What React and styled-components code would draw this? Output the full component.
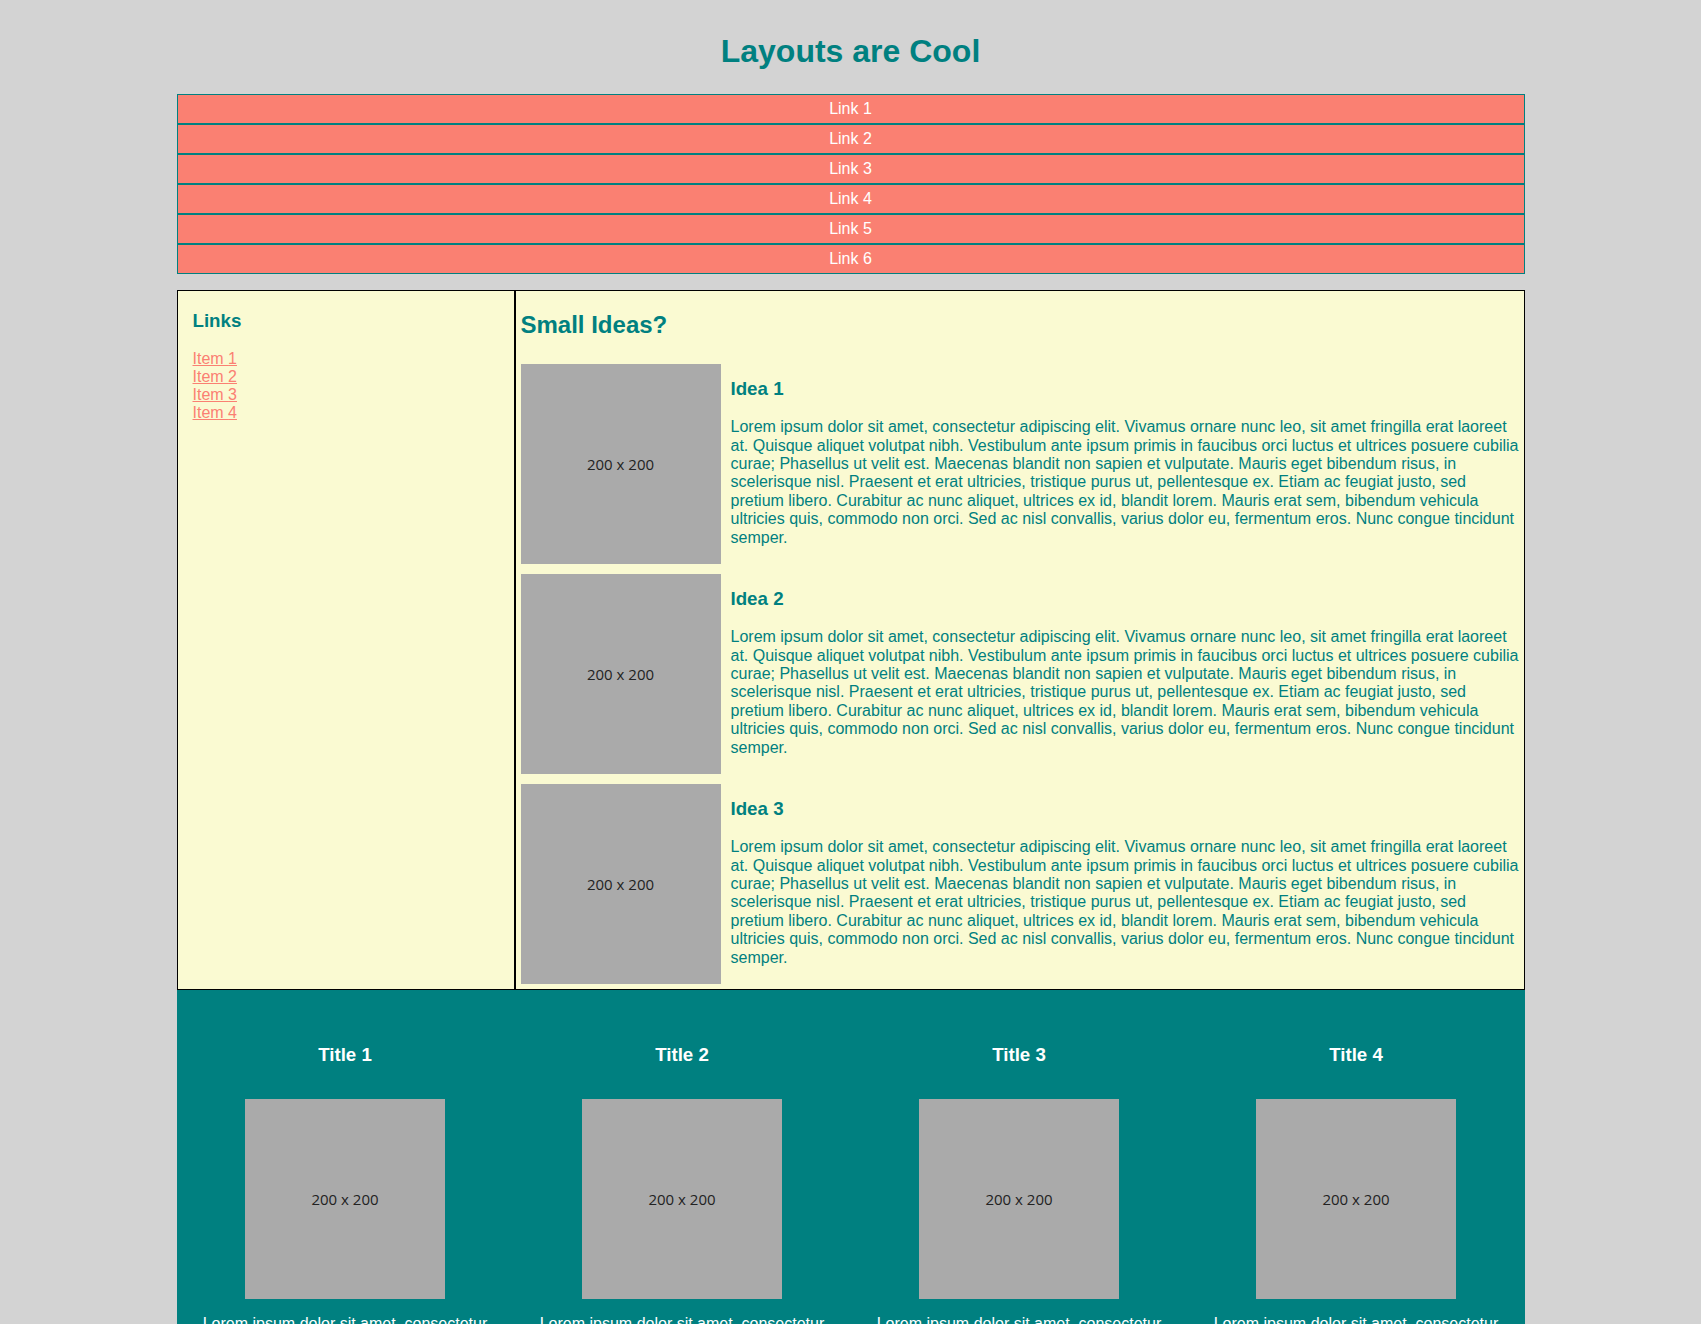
import React from "react";
import styled, { createGlobalStyle } from "styled-components";

const GlobalStyle = createGlobalStyle`
  html, body {
    margin: 0;
    padding: 0;
    background: #d3d3d3;
    font-family: "Liberation Sans", Arial, sans-serif;
  }
  * { box-sizing: border-box; }
`;

const Page = styled.div`
  padding-top: 33px;
  overflow: hidden;
`;

const Title = styled.h1`
  margin: 0 0 24px;
  text-align: center;
  color: #008080;
  font-size: 32px;
  line-height: 37px;
  font-weight: bold;
`;

const Container = styled.div`
  width: 1348px;
  margin: 0 auto;
`;

const Nav = styled.nav`
  display: flex;
  flex-direction: column;
  margin-bottom: 16px;
`;

const NavLink = styled.a`
  display: block;
  background: #fa8072;
  border: 1px solid #008080;
  color: #ffffff;
  text-align: center;
  text-decoration: none;
  font-size: 16px;
  line-height: 18px;
  padding: 5px;
`;

const Main = styled.main`
  display: flex;
  align-items: stretch;
  background: #fafad2;
`;

const Aside = styled.aside`
  flex: 0 0 338px;
  border: 1px solid #000;
  padding: 0 15px;
`;

const AsideTitle = styled.h3`
  margin: 18.72px 0;
  font-size: 18.72px;
  color: #008080;
`;

const LinkList = styled.ul`
  list-style: none;
  margin: 1px 0 0;
  padding: 0;
`;

const ItemLink = styled.a`
  display: inline-block;
  color: #fa8072;
  font-size: 16px;
  line-height: 18px;
  text-decoration: underline;
`;

const Content = styled.section`
  flex: 1;
  border: 1px solid #000;
`;

const SectionTitle = styled.h2`
  margin: 19.92px 5px;
  font-size: 24px;
  color: #008080;
`;

const Idea = styled.article`
  display: flex;
  align-items: flex-start;
`;

const Placeholder = styled.div`
  flex: 0 0 200px;
  width: 200px;
  height: 200px;
  margin: ${(p) => p.$margin || "5px"};
  background: #aaaaaa;
  color: #222;
  display: flex;
  align-items: center;
  justify-content: center;
  font-family: "Open Sans", "DejaVu Sans", sans-serif;
  font-size: 15px;
`;

const IdeaBody = styled.div`
  flex: 1;
  padding: 0 5px;
  color: #008080;
`;

const IdeaTitle = styled.h3`
  margin: 18.72px 0;
  font-size: 18.72px;
`;

const IdeaText = styled.p`
  margin: 16px 0;
  font-size: 16px;
  line-height: 18.4px;
`;

const Footer = styled.footer`
  display: grid;
  grid-template-columns: repeat(4, 1fr);
  background: #008080;
  padding: 20px 0;
`;

const FooterCol = styled.div`
  padding: 15px;
  text-align: center;
  color: #ffffff;
  display: flex;
  flex-direction: column;
  align-items: center;
`;

const FooterTitle = styled.h3`
  margin: 18.72px 0;
  font-size: 18.72px;
`;

const FooterText = styled.p`
  margin: 16px 0;
  font-size: 16px;
  line-height: 18.4px;
`;

const lorem =
  "Lorem ipsum dolor sit amet, consectetur adipiscing elit. Vivamus ornare nunc leo, sit amet fringilla erat laoreet at. Quisque aliquet volutpat nibh. Vestibulum ante ipsum primis in faucibus orci luctus et ultrices posuere cubilia curae; Phasellus ut velit est. Maecenas blandit non sapien et vulputate. Mauris eget bibendum risus, in scelerisque nisl. Praesent et erat ultricies, tristique purus ut, pellentesque ex. Etiam ac feugiat justo, sed pretium libero. Curabitur ac nunc aliquet, ultrices ex id, blandit lorem. Mauris erat sem, bibendum vehicula ultricies quis, commodo non orci. Sed ac nisl convallis, varius dolor eu, fermentum eros. Nunc congue tincidunt semper.";

const footerLorem =
  "Lorem ipsum dolor sit amet, consectetur adipiscing elit. Vivamus ornare nunc leo, sit amet fringilla erat laoreet at. Quisque aliquet volutpat nibh.";

export default function App() {
  const links = [1, 2, 3, 4, 5, 6];
  const items = [1, 2, 3, 4];
  const ideas = [1, 2, 3];
  const titles = [1, 2, 3, 4];
  return (
    <>
      <GlobalStyle />
      <Page>
        <Title>Layouts are Cool</Title>
        <Container>
          <Nav>
            {links.map((n) => (
              <NavLink key={n} href="#">
                Link {n}
              </NavLink>
            ))}
          </Nav>
          <Main>
            <Aside>
              <AsideTitle>Links</AsideTitle>
              <LinkList>
                {items.map((n) => (
                  <li key={n}>
                    <ItemLink href="#">Item {n}</ItemLink>
                  </li>
                ))}
              </LinkList>
            </Aside>
            <Content>
              <SectionTitle>Small Ideas?</SectionTitle>
              {ideas.map((n) => (
                <Idea key={n}>
                  <Placeholder>200 x 200</Placeholder>
                  <IdeaBody>
                    <IdeaTitle>Idea {n}</IdeaTitle>
                    <IdeaText>{lorem}</IdeaText>
                  </IdeaBody>
                </Idea>
              ))}
            </Content>
          </Main>
          <Footer>
            {titles.map((n) => (
              <FooterCol key={n}>
                <FooterTitle>Title {n}</FooterTitle>
                <Placeholder $margin="15px 0 0">200 x 200</Placeholder>
                <FooterText>{footerLorem}</FooterText>
              </FooterCol>
            ))}
          </Footer>
        </Container>
      </Page>
    </>
  );
}
